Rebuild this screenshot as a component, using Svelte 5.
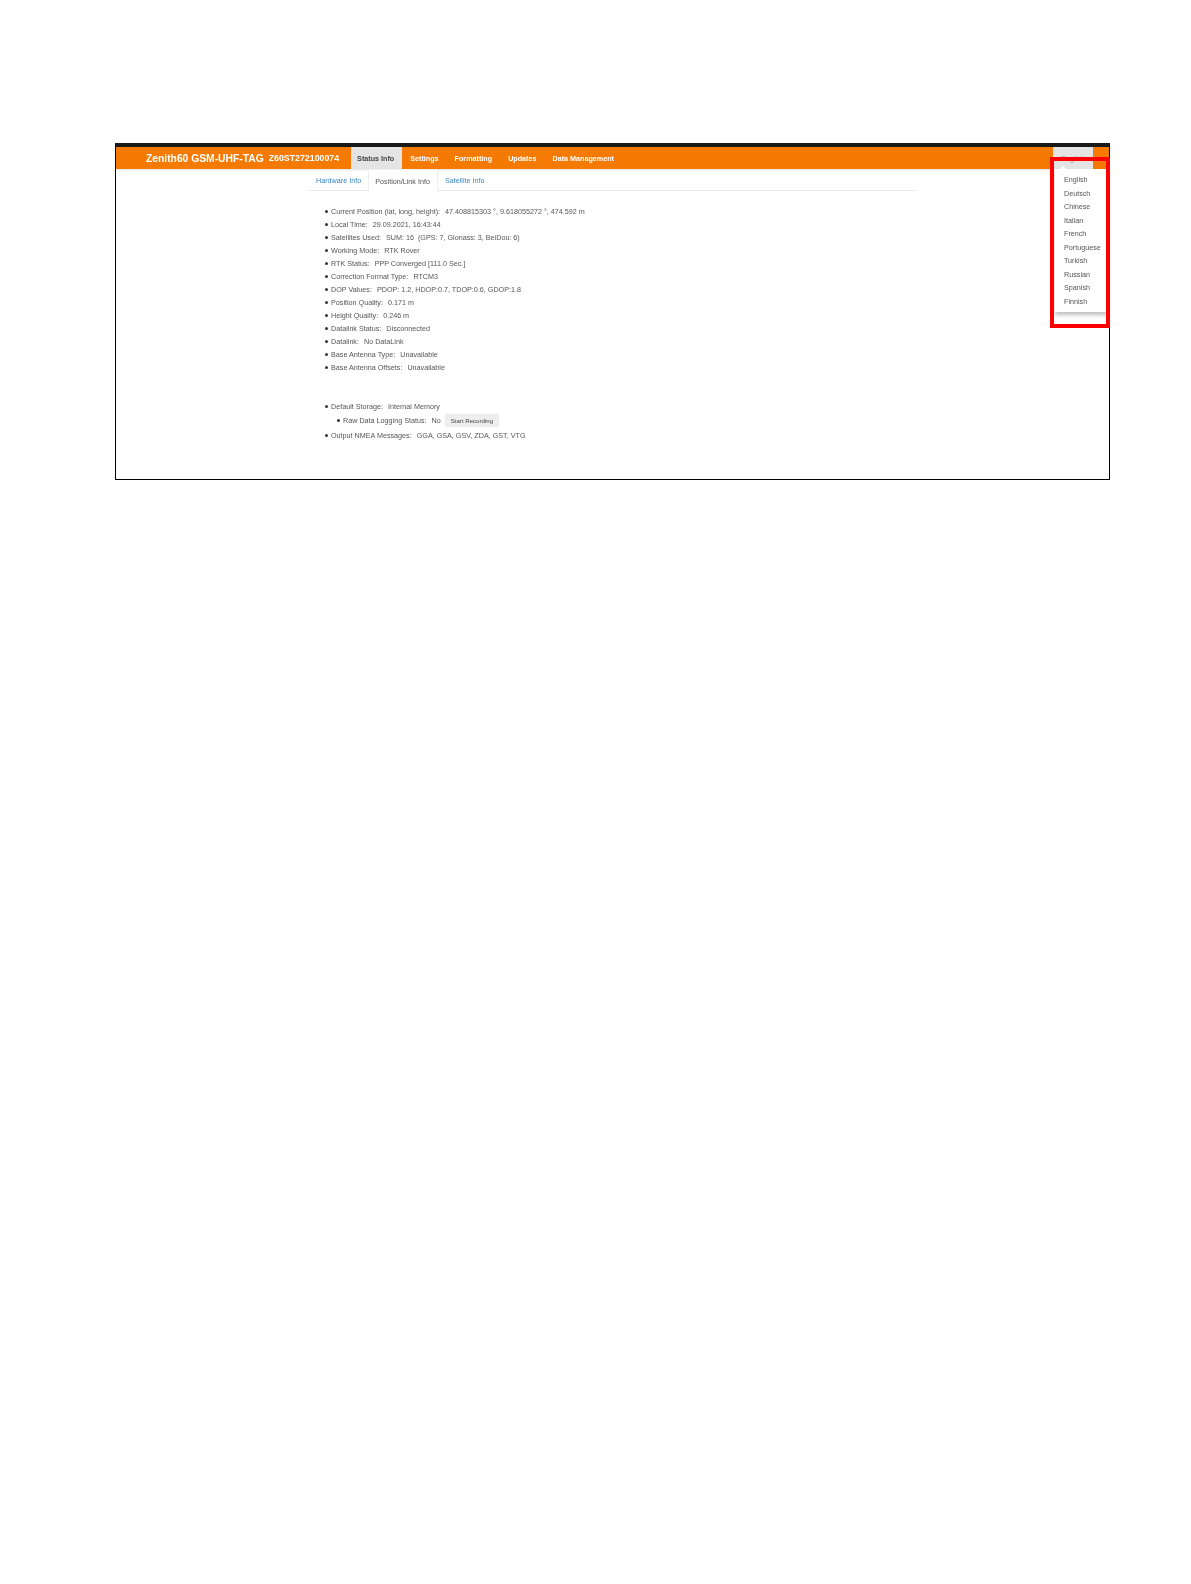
<script>
  const tabs = ["Status Info", "Settings", "Formatting", "Updates", "Data Management"];
  const subTabs = ["Hardware Info", "Position/Link Info", "Satellite Info"];
  const languages = ["English", "Deutsch", "Chinese", "Italian", "French", "Portuguese", "Turkish", "Russian", "Spanish", "Finnish"];
  const statusRows = [
    ["Current Position (lat, long, height):", "47.408815303 °, 9.618055272 °, 474.592 m"],
    ["Local Time:", "29.09.2021, 16:43:44"],
    ["Satellites Used:", "SUM: 16  (GPS: 7, Glonass: 3, BeiDou: 6)"],
    ["Working Mode:", "RTK Rover"],
    ["RTK Status:", "PPP Converged [111.0 Sec.]"],
    ["Correction Format Type:", "RTCM3"],
    ["DOP Values:", "PDOP: 1.2, HDOP:0.7, TDOP:0.6, GDOP:1.8"],
    ["Position Quality:", "0.171 m"],
    ["Height Quality:", "0.246 m"],
    ["Datalink Status:", "Disconnected"],
    ["Datalink:", "No DataLink"],
    ["Base Antenna Type:", "Unavailable"],
    ["Base Antenna Offsets:", "Unavailable"]
  ];
</script>

<div class="page">
  <div class="frame">
    <header class="navbar">
      <span class="brand">Zenith60 GSM-UHF-TAG</span>
      <span class="serial">Z60ST272100074</span>
      <nav class="nav">
        {#each tabs as tab, i}
          <span class="nav-item" class:active={i === 0}>{tab}</span>
        {/each}
      </nav>
      <span class="lang-toggle">English</span>
    </header>

    <div class="content">
      <div class="subtabs">
        {#each subTabs as tab, i}
          <span class="subtab" class:active={i === 1}>{tab}</span>
        {/each}
      </div>

      <ul class="info">
        {#each statusRows as row}
          <li><span>{row[0]}</span><span class="value">{row[1]}</span></li>
        {/each}
      </ul>

      <ul class="info storage">
        <li>
          <span>Default Storage:</span><span class="value">Internal Memory</span>
          <ul class="nested">
            <li>
              <span>Raw Data Logging Status:</span><span class="value">No</span>
              <button class="record">Start Recording</button>
            </li>
          </ul>
        </li>
        <li><span>Output NMEA Messages:</span><span class="value">GGA, GSA, GSV, ZDA, GST, VTG</span></li>
      </ul>
    </div>

    <div class="lang-menu">
      <span class="caret"></span>
      {#each languages as lang}
        <span class="lang">{lang}</span>
      {/each}
    </div>
    <div class="highlight"></div>
  </div>
</div>

<style>
  :global(body) {
    margin: 0;
    background: #fff;
  }

  .page {
    height: 1584px;
    padding: 143px 81px 0 115px;
    box-sizing: border-box;
    font-family: "Liberation Sans", Arial, sans-serif;
  }

  .frame {
    position: relative;
    height: 337px;
    box-sizing: border-box;
    border: 1px solid #000;
    border-top: 4px solid #1a1a1a;
    color: #555;
  }

  .navbar {
    display: flex;
    align-items: center;
    height: 22px;
    padding-left: 30px;
    background: #f57a04;
    box-shadow: 0 1px 2px rgba(0, 0, 0, 0.12);
    color: #fff;
    filter: blur(0.4px);
  }

  .brand {
    font-size: 10.3px;
    font-weight: bold;
  }

  .serial {
    margin-left: 5px;
    font-size: 8.8px;
    font-weight: bold;
  }

  .nav {
    display: flex;
    align-self: stretch;
    margin-left: 12px;
  }

  .nav-item {
    display: flex;
    align-items: center;
    padding: 0 8px;
    font-size: 7.2px;
    font-weight: bold;
  }

  .nav-item.active {
    padding-left: 6px;
    background: #e4e4e4;
    color: #444;
  }

  .lang-toggle {
    align-self: stretch;
    display: flex;
    align-items: center;
    justify-content: center;
    width: 40px;
    margin-left: auto;
    margin-right: 16px;
    background: #e4e4e4;
    color: #999;
    font-size: 7.2px;
  }

  .content {
    width: 607px;
    margin-left: 193px;
    filter: blur(0.4px);
  }

  .subtabs {
    display: flex;
    height: 21px;
    border-bottom: 1px solid #e9e9e9;
    font-size: 7.2px;
  }

  .subtab {
    display: flex;
    align-items: center;
    padding: 0 6px;
    color: #3a87c0;
    border: 1px solid transparent;
    border-bottom: 0;
  }

  .subtab.active {
    height: 22px;
    padding-right: 7px;
    background: #fff;
    border-color: #eee;
    color: #555;
  }

  ul {
    margin: 0;
    padding: 0;
    list-style: none;
  }

  .info {
    margin: 14px 0 0 16px;
    font-size: 7.2px;
  }

  .info > li {
    position: relative;
    padding-left: 6px;
    line-height: 13px;
  }

  li::before {
    content: "";
    position: absolute;
    left: 0;
    top: 5px;
    width: 3px;
    height: 3px;
    border-radius: 50%;
    background: #333;
  }

  .value {
    margin-left: 5px;
    white-space: pre-wrap;
  }

  .storage {
    margin-top: 26px;
  }

  .nested {
    margin: -0.5px 0 1px 6px;
  }

  .nested li {
    position: relative;
    display: flex;
    align-items: center;
    height: 15px;
    padding-left: 6px;
  }

  .nested li::before {
    top: 6px;
  }

  .record {
    height: 13px;
    margin-left: 4px;
    padding: 0 6px;
    border: 0;
    border-radius: 2px;
    background: #eee;
    box-shadow: 0 0 1px rgba(0, 0, 0, 0.2);
    color: #444;
    font-family: inherit;
    font-size: 6.1px;
  }

  .lang-menu {
    position: absolute;
    top: 22px;
    right: 1px;
    display: flex;
    flex-direction: column;
    width: 53px;
    height: 143px;
    padding-top: 4px;
    box-sizing: border-box;
    background: #fff;
    box-shadow: 0 3px 4px rgba(0, 0, 0, 0.25);
    font-size: 7.2px;
    filter: blur(0.4px);
  }

  .caret {
    position: absolute;
    top: -3px;
    left: 5px;
    border: 3px solid transparent;
    border-top: 0;
    border-bottom-color: #fff;
  }

  .lang {
    height: 13.5px;
    line-height: 13.5px;
    padding-left: 9px;
  }

  .highlight {
    position: absolute;
    top: 10px;
    right: -1px;
    width: 60px;
    height: 171px;
    box-sizing: border-box;
    border: 4px solid #f00;
  }
</style>
